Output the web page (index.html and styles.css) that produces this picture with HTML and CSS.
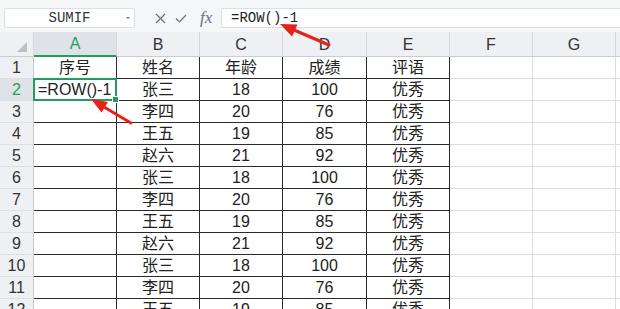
FILE: index.html
```html
<!DOCTYPE html>
<html lang="zh-CN">
<head>
  <meta charset="UTF-8" />
  <title>ROW 序号</title>
  <link rel="stylesheet" href="styles.css">
</head>
<body>
  <div class="toolbar">
    <div class="namebox">
      <span>SUMIF</span>
      <span class="caret"></span>
    </div>
    <div class="tools">
      <svg class="ico-x" width="11" height="11" viewBox="0 0 11 11"><path d="M1 1 L10 10 M10 1 L1 10" stroke="#6b7079" stroke-width="1.2" fill="none"/></svg>
      <svg class="ico-ok" width="12" height="9" viewBox="0 0 12 9"><path d="M1 4.5 L4.5 8 L11 1" stroke="#6b7079" stroke-width="1.2" fill="none"/></svg>
      <span class="fx">fx</span>
    </div>
    <div class="formula">=ROW()-1</div>
  </div>

  <div class="sheet" id="sheet">
    <!-- cells inserted via JavaScript -->
  </div>

  <svg class="arrows" width="620" height="309" viewBox="0 0 620 309">
    <line x1="329" y1="45" x2="294" y2="30" stroke="#e8201a" stroke-width="3" stroke-linecap="round"/>
    <polygon points="280,24 297.5,24.5 292,36.5" fill="#e8201a"/>
    <line x1="131" y1="123" x2="104" y2="107" stroke="#e8201a" stroke-width="3" stroke-linecap="round"/>
    <polygon points="91,99 108,102 101.5,112.5" fill="#e8201a"/>
  </svg>

  <script>
    const cols = ['A', 'B', 'C', 'D', 'E', 'F', 'G'];
    const people = [
      ['张三', 18, 100],
      ['李四', 20, 76],
      ['王五', 19, 85],
      ['赵六', 21, 92],
    ];

    const rows = [['序号', '姓名', '年龄', '成绩', '评语']];
    for (let i = 0; i < 11; i++) {
      const p = people[i % 4];
      rows.push([i === 0 ? '=ROW()-1' : '', p[0], p[1], p[2], '优秀']);
    }

    const sheet = document.getElementById('sheet');
    let html = '<div class="corner"><span class="tri"></span></div>';
    cols.forEach(c => {
      html += `<div class="colhead${c === 'A' ? ' sel' : ''}">${c}</div>`;
    });
    html += '<div class="colhead edge"></div>';

    rows.forEach((r, i) => {
      const n = i + 1;
      html += `<div class="rowhead${n === 2 ? ' sel' : ''}">${n}</div>`;
      cols.forEach((c, j) => {
        const val = r[j] !== undefined ? r[j] : '';
        let cls = 'cell';
        if (j < 5) cls += ' tbl';
        if (n === 2 && j === 0) cls += ' active';
        html += `<div class="${cls}">${val}</div>`;
      });
      html += '<div class="cell edge"></div>';
    });

    sheet.innerHTML = html;
  </script>
</body>
</html>
```

FILE: styles.css
```css
:root {
  --green: #1f9e5e;
  --grid: #dadde3;
  --ink: #2b2b2b;
  --head-bg: #eef0f3;
}

* {
  box-sizing: border-box;
}

body {
  margin: 0;
  width: 620px;
  height: 309px;
  overflow: hidden;
  position: relative;
  background: #fff;
  font-family: 'Liberation Sans', 'Noto Sans CJK SC', sans-serif;
  color: #222;
}

.toolbar {
  height: 32px;
  display: flex;
  align-items: flex-start;
  padding: 8px 0 0 4px;
  background: #f5f6f8;
}

.namebox {
  width: 131px;
  height: 20px;
  background: #fff;
  border: 1px solid #dcdfe4;
  border-radius: 2px;
  display: flex;
  align-items: center;
  justify-content: center;
  position: relative;
  font-family: 'Liberation Mono', monospace;
  font-size: 14px;
  color: #333;
}

.namebox .caret {
  position: absolute;
  right: 4px;
  top: 8px;
  border-left: 2px solid transparent;
  border-right: 2px solid transparent;
  border-top: 2px solid #777;
}

.tools {
  width: 86px;
  height: 20px;
  display: flex;
  align-items: center;
  padding-left: 20px;
}

.ico-ok {
  margin-left: 9px;
}

.fx {
  font-family: 'Liberation Serif', serif;
  font-style: italic;
  font-size: 17px;
  color: #6b7079;
  margin-left: 13px;
}

.formula {
  flex: 1;
  height: 20px;
  background: #fff;
  border: 1px solid #dcdfe4;
  border-right: none;
  border-radius: 2px 0 0 2px;
  padding-left: 9px;
  font-family: 'Liberation Mono', monospace;
  font-size: 14px;
  line-height: 18px;
  color: #222;
}

.sheet {
  display: grid;
  grid-template-columns: 34px 83px 83px 83px 84px 83px 83px 83px 4px;
  grid-template-rows: 25px repeat(12, 22px);
}

.corner,
.colhead {
  background: var(--head-bg);
  border-bottom: 1px solid #c9cdd3;
  border-right: 1px solid #d4d7dd;
  font-size: 16px;
  color: #333;
  display: flex;
  align-items: flex-end;
  justify-content: center;
  padding-bottom: 2px;
}

.corner {
  position: relative;
}

.corner .tri {
  position: absolute;
  right: 6px;
  bottom: 4px;
  width: 0;
  height: 0;
  border-left: 10px solid transparent;
  border-bottom: 10px solid #bcc0c6;
}

.colhead.sel {
  background: #dfe2e7;
  color: var(--green);
  border-bottom: 2px solid var(--green);
}

.colhead.edge {
  border-right: none;
}

.rowhead {
  background: var(--head-bg);
  border-right: 1px solid #c4c8ce;
  border-bottom: 1px solid #dcdfe4;
  font-size: 16px;
  color: #333;
  display: flex;
  align-items: center;
  justify-content: center;
}

.rowhead.sel {
  background: #dfe2e7;
  color: var(--green);
}

.cell {
  border-right: 1px solid var(--grid);
  border-bottom: 1px solid var(--grid);
  font-size: 16px;
  line-height: 21px;
  text-align: center;
  white-space: nowrap;
  color: #222;
}

.cell.tbl {
  border-right-color: var(--ink);
  border-bottom-color: var(--ink);
}

.cell.edge {
  border-right: none;
}

.cell.active {
  position: relative;
  text-align: left;
  padding-left: 4px;
}

.cell.active::after {
  content: '';
  position: absolute;
  left: -1px;
  top: -1px;
  right: -1px;
  bottom: -1px;
  border: 2px solid var(--green);
}

.cell.active::before {
  content: '';
  position: absolute;
  right: -3px;
  bottom: -3px;
  width: 5px;
  height: 5px;
  background: var(--green);
  border: 1px solid #fff;
  z-index: 1;
}

.arrows {
  position: absolute;
  left: 0;
  top: 0;
  pointer-events: none;
}
```
